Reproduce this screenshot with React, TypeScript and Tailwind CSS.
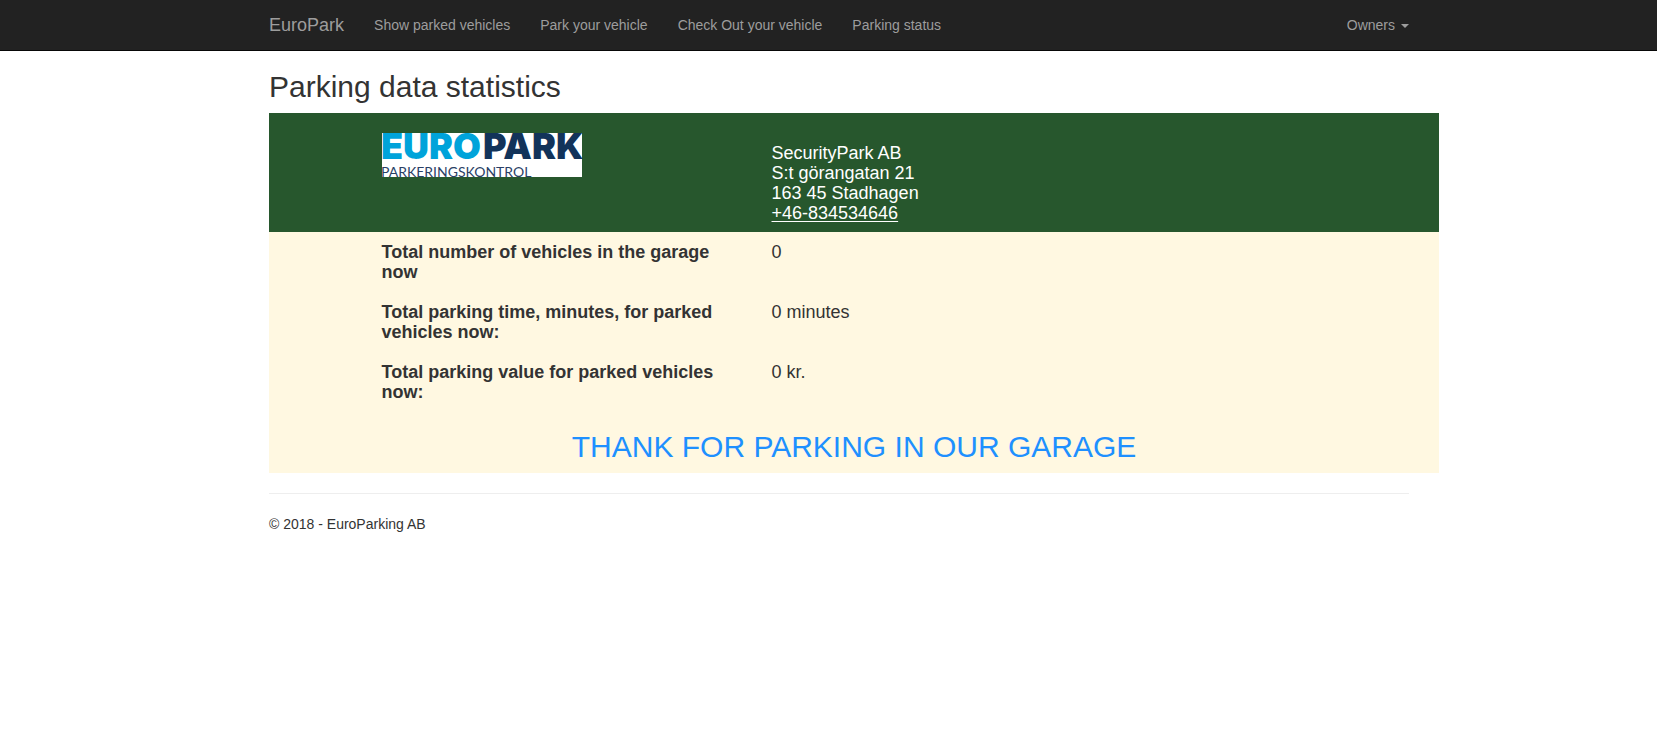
import React from "react";

const navLinks = [
  "Show parked vehicles",
  "Park your vehicle",
  "Check Out your vehicle",
  "Parking status",
];

const statistics = [
  { label: "Total number of vehicles in the garage now", value: "0" },
  { label: "Total parking time, minutes, for parked vehicles now:", value: "0 minutes" },
  { label: "Total parking value for parked vehicles now:", value: "0 kr." },
];

function Navbar() {
  return (
    <header className="border-b border-[#080808] bg-[#222] pl-[21px] text-[#9d9d9d]">
      <nav className="mx-auto flex h-[50px] max-w-[1140px] items-center">
        <a href="#" className="mr-[30px] text-lg leading-5">
          EuroPark
        </a>
        <ul className="flex gap-[30px] text-sm">
          {navLinks.map((link) => (
            <li key={link}>
              <a href="#" className="hover:text-white">
                {link}
              </a>
            </li>
          ))}
        </ul>
        <button type="button" className="ml-auto flex items-center gap-1.5 text-sm hover:text-white">
          Owners
          <svg width="8" height="4" viewBox="0 0 8 4" className="mt-0.5" fill="currentColor" aria-hidden="true">
            <path d="M0 0h8L4 4z" />
          </svg>
        </button>
      </nav>
    </header>
  );
}

function Logo() {
  return (
    <svg
      width="200"
      height="44"
      viewBox="0 0 200 44"
      className="mt-5 overflow-visible bg-white"
      role="img"
      aria-label="Europark Parkeringskontrol"
    >
      <g className="font-['Inter',sans-serif] text-4xl font-black">
        <text x="-1" y="26" fill="#00a3da">
          EURO
        </text>
        <text x="101" y="26" fill="#12335a">
          PARK
        </text>
      </g>
      <text x="-1" y="44" fill="#2a3f66" className="font-['Lato',sans-serif] text-sm">
        PARKERINGSKONTROL
      </text>
    </svg>
  );
}

export default function App() {
  return (
    <div className="min-h-screen bg-white font-['Liberation_Sans',Arial,sans-serif] text-[#333]">
      <Navbar />
      <div className="pl-[21px]">
        <main className="mx-auto max-w-[1140px]">
          <h2 className="pt-[19px] pb-2.5 text-3xl leading-[33px]">Parking data statistics</h2>

          <section className="-mr-[30px] text-lg leading-5">
            <div className="grid grid-cols-12 bg-[#27572d] text-white">
              <div className="col-span-4 col-start-2 px-[15px]">
                <Logo />
              </div>
              <address className="col-span-7 px-[15px] pt-[30px] pb-[9px] not-italic">
                SecurityPark AB
                <br />
                S:t görangatan 21
                <br />
                163 45 Stadhagen
                <br />
                <a href="tel:+46834534646" className="underline decoration-1 underline-offset-2">
                  +46-834534646
                </a>
              </address>
            </div>

            <div className="bg-[#fff8e1] py-2.5">
              <dl className="flex flex-col gap-5">
                {statistics.map((item) => (
                  <div key={item.label} className="grid grid-cols-12">
                    <dt className="col-span-4 col-start-2 px-[15px] font-bold">{item.label}</dt>
                    <dd className="col-span-7 px-[15px]">{item.value}</dd>
                  </div>
                ))}
              </dl>
              <p className="pt-7 text-center text-3xl leading-[33px] text-[#1e90ff]">
                THANK FOR PARKING IN OUR GARAGE
              </p>
            </div>
          </section>

          <hr className="my-5 border-[#eee]" />
          <footer className="text-sm">© 2018 - EuroParking AB</footer>
        </main>
      </div>
    </div>
  );
}
